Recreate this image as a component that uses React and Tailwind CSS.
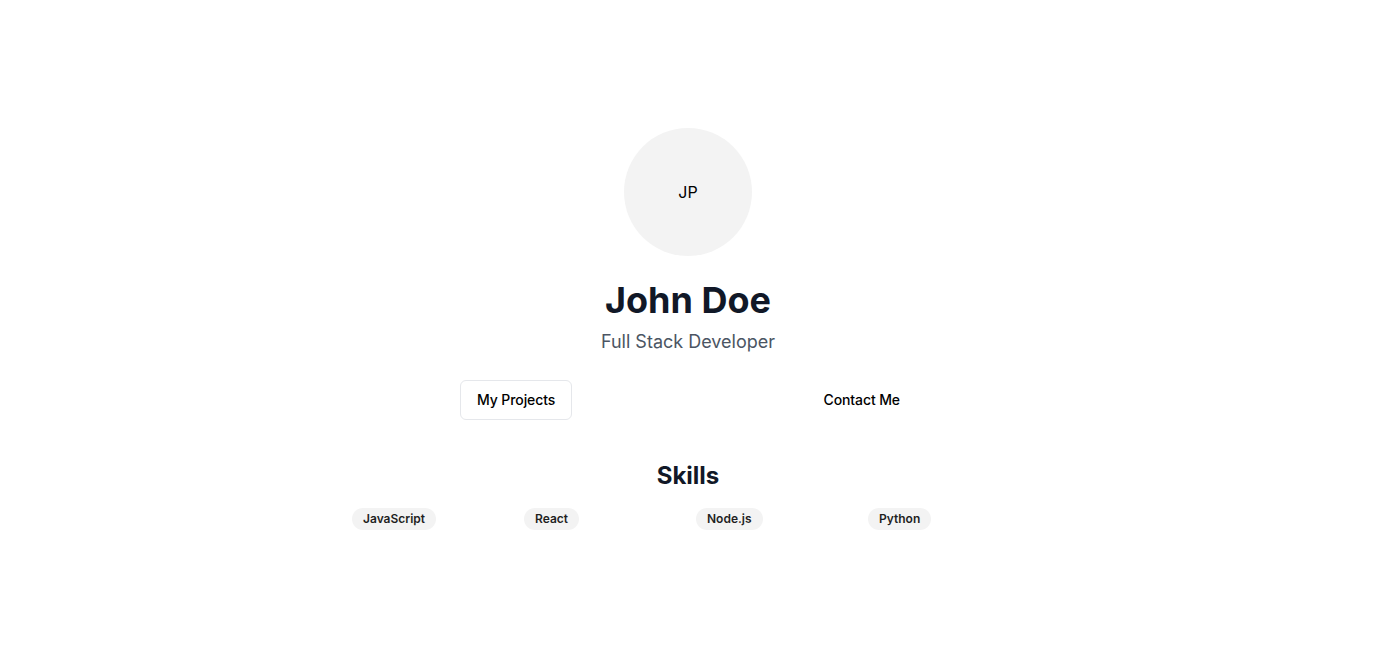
const skills = ["JavaScript", "React", "Node.js", "Python"];

export default function App() {
  return (
    <div
      className="min-h-screen bg-white flex flex-col items-center justify-center text-gray-900"
      style={{ fontFamily: "Inter, 'Noto Sans', sans-serif" }}
    >
      <div className="w-32 h-32 rounded-full bg-[#f3f3f3] flex items-center justify-center text-base text-black">
        JP
      </div>
      <h1 className="mt-6 text-4xl font-bold text-[#111827]">John Doe</h1>
      <p className="mt-2 text-lg text-[#4b5563]">Full Stack Developer</p>

      <div className="mt-6 w-[456px] flex justify-between">
        <button className="h-10 px-4 rounded-md border border-[#e5e7eb] bg-white text-sm font-medium text-black tracking-[-0.1px]">
          My Projects
        </button>
        <button className="h-10 px-4 rounded-md text-sm font-medium text-black tracking-[-0.1px]">
          Contact Me
        </button>
      </div>

      <h2 className="mt-10 text-2xl font-bold text-[#111827]">Skills</h2>
      <div className="mt-4 w-[672px] grid grid-cols-4 gap-4">
        {skills.map((s) => (
          <span
            key={s}
            className="justify-self-start px-[11px] py-[3px] rounded-full bg-[#f3f3f3] text-xs font-semibold text-[#1f1f1f]"
          >
            {s}
          </span>
        ))}
      </div>
    </div>
  );
}
